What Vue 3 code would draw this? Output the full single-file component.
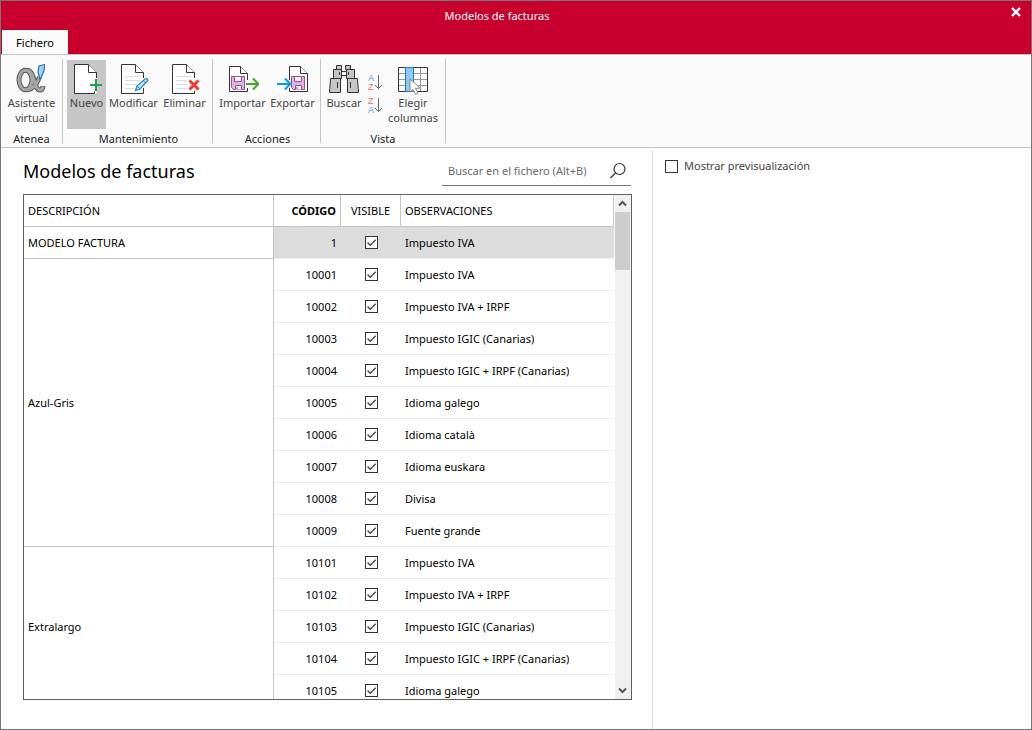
<script setup>
import { ref } from 'vue'

const groups = ref([
  { name: 'MODELO FACTURA', rows: [{ code: 1, visible: true, note: 'Impuesto IVA' }] },
  {
    name: 'Azul-Gris',
    rows: [
      { code: 10001, visible: true, note: 'Impuesto IVA' },
      { code: 10002, visible: true, note: 'Impuesto IVA + IRPF' },
      { code: 10003, visible: true, note: 'Impuesto IGIC (Canarias)' },
      { code: 10004, visible: true, note: 'Impuesto IGIC + IRPF (Canarias)' },
      { code: 10005, visible: true, note: 'Idioma galego' },
      { code: 10006, visible: true, note: 'Idioma català' },
      { code: 10007, visible: true, note: 'Idioma euskara' },
      { code: 10008, visible: true, note: 'Divisa' },
      { code: 10009, visible: true, note: 'Fuente grande' }
    ]
  },
  {
    name: 'Extralargo',
    rows: [
      { code: 10101, visible: true, note: 'Impuesto IVA' },
      { code: 10102, visible: true, note: 'Impuesto IVA + IRPF' },
      { code: 10103, visible: true, note: 'Impuesto IGIC (Canarias)' },
      { code: 10104, visible: true, note: 'Impuesto IGIC + IRPF (Canarias)' },
      { code: 10105, visible: true, note: 'Idioma galego' }
    ]
  }
])
const selected = ref(1)
const search = ref('')
const preview = ref(false)
</script>

<template>
  <div class="window">
    <header class="titlebar">
      <div class="caption">Modelos de facturas</div>
      <button class="close" type="button" aria-label="Cerrar">
        <svg width="10" height="10" viewBox="0 0 10 10"><path d="M1 1L9 9M9 1L1 9" stroke="#fff" stroke-width="2.4" /></svg>
      </button>
      <nav class="tabs"><button class="tab" type="button">Fichero</button></nav>
    </header>

    <div class="ribbon">
      <section class="group atenea">
        <div class="tools">
          <button class="tool" type="button">
            <svg class="icon" viewBox="0 0 32 32" fill="none">
              <g stroke="#555" stroke-width="5">
                <ellipse cx="9.500" cy="17" rx="6.500" ry="9.700" />
                <path d="M12 7.500C19 9 17.500 27 24 27C26 27 26.800 25.500 27 23" />
                <path d="M23.500 14C21 21 17 26.500 11 27" />
              </g>
              <g stroke="#a6a6a6" stroke-width="3">
                <ellipse cx="9.500" cy="17" rx="6.500" ry="9.700" />
                <path d="M12 7.500C19 9 17.500 27 24 27C26 27 26.800 25.500 27 23.500" />
                <path d="M23.500 14C21 21 17 26.500 11 27" />
              </g>
              <path d="M23 3L28.500 1.5L28 8L24 16.500L22 9Z" fill="#9fd0f5" stroke="#1c7cc4" stroke-width="1.2" />
            </svg>
            <span>Asistente<br>virtual</span>
          </button>
        </div>
        <h2>Atenea</h2>
      </section>

      <section class="group mantenimiento">
        <div class="tools">
          <button class="tool active" type="button">
            <svg class="icon" viewBox="0 0 32 32">
              <path d="M3.5 1.5H17.5L25.5 9.5V30.5H3.5Z" fill="#fff" />
              <path d="M25.5 15V9.5L17.5 1.5H3.5V30.5H23.5V28.500" fill="none" stroke="#333" />
              <path d="M17.5 1.5V9.5H25.5" fill="#fff" stroke="#333" />
              <path d="M25 16V28M19 22H31" stroke="#16a84c" stroke-width="2" />
            </svg>
            <span>Nuevo</span>
          </button>
          <button class="tool" type="button">
            <svg class="icon" viewBox="0 0 32 32">
              <path d="M3.5 1.5H17.5L25.5 9.5V30.5H3.5Z" fill="#fff" />
              <path d="M7 13.500H22M7 17.500H22M7 21.500H19M7 25.500H16" stroke="#ddd" />
              <path d="M25.5 15V9.5L17.5 1.5H3.5V30.5H25.5V25" fill="none" stroke="#333" />
              <path d="M17.5 1.5V9.5H25.5" fill="#fff" stroke="#333" />
              <path d="M17.500 27.500L19 23L27 16Q29.500 15 29.800 17.500L22 26Z" fill="#cfe8fa" stroke="#2188cf" stroke-width="1.3" />
              <path d="M25 17.500L28 20M19 23L22 26" stroke="#2188cf" />
            </svg>
            <span>Modificar</span>
          </button>
          <button class="tool" type="button">
            <svg class="icon" viewBox="0 0 32 32">
              <path d="M3.5 1.5H17.5L25.5 9.5V30.5H3.5Z" fill="#fff" />
              <path d="M7 13.500H22M7 17.500H18M7 21.500H18M7 25.500H18" stroke="#ddd" />
              <path d="M25.5 15V9.5L17.5 1.5H3.5V30.5H25.5V28" fill="none" stroke="#333" />
              <path d="M17.5 1.5V9.5H25.5" fill="#fff" stroke="#333" />
              <path d="M20.500 17.500L29.500 26.500M29.500 17.500L20.500 26.500" stroke="#ee3a36" stroke-width="3" />
            </svg>
            <span>Eliminar</span>
          </button>
        </div>
        <h2>Mantenimiento</h2>
      </section>

      <section class="group acciones">
        <div class="tools">
          <button class="tool" type="button">
            <svg class="icon" viewBox="0 0 32 32">
              <path d="M20.5 17V10.5L13.5 3.5H2.5V28.5H20.5V25" fill="#fff" stroke="#333" />
              <path d="M13.5 3.5V10.5H20.5" fill="#fff" stroke="#333" />
              <path d="M4.500 13.500H17.500V26.500H6.500L4.500 24.500Z" fill="#ddb5e0" stroke="#9b4ba4" />
              <path d="M7.500 13.500H14.500V18.500H7.500Z" fill="#fff" stroke="#9b4ba4" />
              <path d="M8.500 26.500V22.500H14.500V26.500" fill="#fff" stroke="#9b4ba4" />
              <path d="M10 24V26" stroke="#9b4ba4" />
              <path d="M19 21H31M26 15.500L31.300 21L26 26.500" fill="none" stroke="#42a62a" stroke-width="2" />
            </svg>
            <span>Importar</span>
          </button>
          <button class="tool" type="button">
            <svg class="icon" viewBox="0 0 32 32">
              <path d="M12.5 17V3.5H23.5L30.5 10.5V28.5H12.5V25" fill="#fff" stroke="#333" />
              <path d="M23.5 3.5V10.5H30.5" fill="#fff" stroke="#333" />
              <path d="M14.500 13.500H27.500V26.500H16.500L14.500 24.500Z" fill="#ddb5e0" stroke="#9b4ba4" />
              <path d="M17.500 13.500H24.500V18.500H17.500Z" fill="#fff" stroke="#9b4ba4" />
              <path d="M18.500 26.500V22.500H24.500V26.500" fill="#fff" stroke="#9b4ba4" />
              <path d="M20 24V26" stroke="#9b4ba4" />
              <path d="M0 21H13M8 15.500L13.300 21L8 26.500" fill="none" stroke="#009fe3" stroke-width="2" />
            </svg>
            <span>Exportar</span>
          </button>
        </div>
        <h2>Acciones</h2>
      </section>

      <section class="group vista">
        <div class="tools">
          <button class="tool find" type="button">
            <svg class="icon" viewBox="0 0 32 32">
              <g fill="#c6c6c6" stroke="#333">
                <path d="M12.500 8.500H19.500V12.500H12.500Z" fill="#fff" />
                <path d="M8.500 2.500H13.500V6.500H8.500ZM17.500 2.500H22.500V6.500H17.500Z" />
                <path d="M5.500 6.500H13.500V15.500H5.500ZM18.500 6.500H26.500V15.500H18.500Z" />
                <path d="M2.500 15.500H12.500V29.500H1.500ZM19.500 15.500H29.500L30.500 29.500H19.500Z" />
                <path d="M9.500 19V25M22.500 19V25M11.500 9V12M20.500 9V12" />
              </g>
            </svg>
            <span>Buscar</span>
          </button>
          <div class="sorts">
            <button type="button" aria-label="Orden ascendente">
              <svg width="18" height="18" viewBox="0 0 18 18">
                <text class="letter" x="1" y="8" fill="#4b9fd8">A</text>
                <text class="letter" x="1" y="17" fill="#f0686c">Z</text>
                <path d="M11.500 2V15.500M8 12L11.500 15.500L15 12" fill="none" stroke="#666" />
              </svg>
            </button>
            <button type="button" aria-label="Orden descendente">
              <svg width="18" height="18" viewBox="0 0 18 18">
                <text class="letter" x="1" y="8" fill="#f0686c">Z</text>
                <text class="letter" x="1" y="17" fill="#4b9fd8">A</text>
                <path d="M11.500 2V15.500M8 12L11.500 15.500L15 12" fill="none" stroke="#666" />
              </svg>
            </button>
          </div>
          <button class="tool" type="button">
            <svg class="icon" viewBox="0 0 32 32">
              <path d="M1.500 4.500H30.500V28.500H1.500Z" fill="#fff" />
              <path d="M1 10.500H31M1 16.500H31M1 22.500H31M23.500 4V28" stroke="#999" />
              <path d="M1.500 4.500H30.500V28.500H1.500Z" fill="none" stroke="#333" />
              <path d="M8.500 4.500H16.500V28.500H8.500Z" fill="#8fc8f0" stroke="#1c7cc4" />
              <path d="M13 16V29L16 26.500L18.500 31.500L21 30L18.500 25.500L23 25Z" fill="#fff" stroke="#888" />
            </svg>
            <span>Elegir<br>columnas</span>
          </button>
        </div>
        <h2>Vista</h2>
      </section>
    </div>

    <main class="content">
      <section class="list">
        <div class="list-head">
          <h1>Modelos de facturas</h1>
          <form class="search" @submit.prevent>
            <input v-model="search" type="text" placeholder="Buscar en el fichero (Alt+B)" aria-label="Buscar en el fichero">
            <button type="submit" aria-label="Buscar">
              <svg width="18" height="18" viewBox="0 0 18 18"><circle cx="10.500" cy="7" r="5.500" fill="none" stroke="#333" stroke-width="1.200" /><path d="M6.500 11L1.500 16" stroke="#333" stroke-width="1.300" /></svg>
            </button>
          </form>
        </div>

        <div class="grid">
          <div class="viewport">
            <table>
              <colgroup><col class="c-desc"><col class="c-code"><col class="c-vis"><col></colgroup>
              <thead>
                <tr><th>DESCRIPCIÓN</th><th class="code">CÓDIGO</th><th class="vis">VISIBLE</th><th>OBSERVACIONES</th></tr>
              </thead>
              <tbody>
                <template v-for="group in groups" :key="group.name">
                  <tr v-for="(row, i) in group.rows" :key="row.code" :class="{ selected: row.code === selected }" @click="selected = row.code">
                    <td v-if="i === 0" class="desc" :rowspan="group.rows.length">{{ group.name }}</td>
                    <td class="code">{{ row.code }}</td>
                    <td class="vis"><input v-model="row.visible" class="check" type="checkbox" :aria-label="'Visible ' + row.code"></td>
                    <td>{{ row.note }}</td>
                  </tr>
                </template>
              </tbody>
            </table>
          </div>
          <div class="scrollbar">
            <button type="button" aria-label="Subir"><svg width="9" height="7" viewBox="0 0 9 7"><path d="M1 5.500L4.500 2L8 5.500" fill="none" stroke="#555" stroke-width="2" /></svg></button>
            <div class="track"><div class="thumb"></div></div>
            <button type="button" aria-label="Bajar"><svg width="9" height="7" viewBox="0 0 9 7"><path d="M1 1.500L4.500 5L8 1.500" fill="none" stroke="#555" stroke-width="2" /></svg></button>
          </div>
        </div>
      </section>

      <aside class="preview">
        <label><input v-model="preview" class="check" type="checkbox">Mostrar previsualización</label>
      </aside>
    </main>
  </div>
</template>

<style>
body { margin: 0; }
</style>

<style scoped>
* { box-sizing: border-box; }
.window {
  display: flex;
  flex-direction: column;
  height: 100vh;
  border: 1px solid #777;
  background: #fff;
  color: #000;
  font: 11px/16px "Noto Sans", "Open Sans", sans-serif;
}
button {
  margin: 0;
  padding: 0;
  border: 0;
  background: none;
  color: inherit;
  font: inherit;
}
svg { display: block; }
h1, h2 { margin: 0; font-weight: 400; }

.titlebar {
  position: relative;
  flex: none;
  background: #c8002d;
  color: #fff;
}
.caption {
  height: 29px;
  padding-right: 38px;
  line-height: 30px;
  text-align: center;
}
.close {
  position: absolute;
  top: 6px;
  right: 10px;
}
.tabs {
  display: flex;
  padding-left: 1px;
}
.tab {
  width: 66px;
  height: 24px;
  padding-top: 2px;
  background: #fafafa;
  color: #000;
}

.ribbon {
  display: flex;
  flex: none;
  height: 94px;
  padding: 4px 0;
  border-top: 1px solid #c6c6c6;
  border-bottom: 1px solid #c6c6c6;
  background: #fafafa;
}
.group {
  display: flex;
  flex-direction: column;
  border-right: 1px solid #c6c6c6;
}
.group h2 {
  font-size: 11px;
  line-height: 8px;
  text-align: center;
  color: #222;
}
.tools {
  display: flex;
  flex: 1;
  justify-content: center;
  padding-top: 1px;
}
.tool {
  display: flex;
  flex-direction: column;
  align-items: center;
  height: 69px;
  padding-top: 3px;
  line-height: 15px;
  color: #444;
  white-space: nowrap;
}
.active { background: #c6c6c6; }
.icon { width: 32px; height: 32px; }
.letter { font: 9px "Liberation Sans", sans-serif; }
.atenea { width: 62px; }
.mantenimiento { width: 150px; padding-left: 2px; }
.mantenimiento .tool { width: 51px; }
.mantenimiento .active { width: 39px; margin-right: 2px; }
.acciones { width: 108px; padding-left: 2px; }
.acciones .tool { width: 50px; }
.vista { width: 125px; }
.vista .tools { justify-content: flex-start; }
.vista .tool { width: 48px; }
.vista .find { width: 46px; }
.sorts {
  display: flex;
  flex-direction: column;
  gap: 5px;
  width: 22px;
  padding-top: 13px;
}

.content {
  display: grid;
  grid-template-columns: minmax(0, 651fr) minmax(0, 379fr);
  flex: 1;
  min-height: 0;
  padding-top: 2px;
}
.list {
  display: flex;
  flex-direction: column;
  min-height: 0;
  padding: 6px 20px 29px 22px;
}
.list-head {
  display: flex;
  justify-content: space-between;
  margin-bottom: 8px;
  padding-right: 1px;
}
h1 { font-size: 18px; line-height: 30px; }
.search {
  display: flex;
  align-items: center;
  width: 189px;
  height: 30px;
  border-bottom: 1px solid #777;
}
.search input {
  flex: 1;
  min-width: 0;
  padding: 0 0 0 6px;
  border: 0;
  outline: 0;
  background: none;
  font: inherit;
}
.search input::placeholder { color: #6b6b6b; opacity: 1; }
.search button { margin-right: 4px; }

.grid {
  display: flex;
  flex: 1;
  min-height: 0;
  border: 1px solid #5f5f5f;
}
.viewport {
  flex: 1;
  min-width: 0;
  margin-right: 1px;
  overflow: hidden;
}
table {
  width: 100%;
  border-spacing: 0;
  table-layout: fixed;
}
.c-desc { width: 250px; }
.c-code { width: 67px; }
.c-vis { width: 60px; }
th, td {
  height: 32px;
  padding: 0 4px;
  border-bottom: 1px solid #ededed;
  text-align: left;
  white-space: nowrap;
}
th {
  border-right: 1px solid #c6c6c6;
  border-bottom-color: #c6c6c6;
  font-weight: 400;
}
.desc {
  border-right: 1px solid #c6c6c6;
  border-bottom-color: #c6c6c6;
}
.code { text-align: right; }
th.code { font-weight: 700; }
.vis { text-align: center; }
.selected td:not(.desc) { background: #dcdcdc; }
.check {
  display: block;
  flex: none;
  width: 13px;
  height: 13px;
  margin: 0;
  border: 1px solid #333;
  appearance: none;
  background: #fff;
}
.vis .check { margin: 0 auto; }
.check:checked {
  background: #fff url("data:image/svg+xml,%3Csvg xmlns='http://www.w3.org/2000/svg' viewBox='0 0 11 11'%3E%3Cpath d='M1.500 5.500L4.300 8.300L9.700 2.800' fill='none' stroke='%23444' stroke-width='1.300'/%3E%3C/svg%3E");
}

.scrollbar {
  display: flex;
  flex-direction: column;
  width: 16px;
  background: #f0f0f0;
}
.scrollbar button {
  display: flex;
  align-items: center;
  justify-content: center;
  width: 15px;
  height: 17px;
}
.track { flex: 1; }
.thumb {
  width: 15px;
  height: 58px;
  background: #cdcdcd;
}

.preview {
  padding: 8px 12px;
  border-left: 1px solid #dcdcdc;
  color: #444;
}
.preview label {
  display: inline-flex;
  align-items: center;
  gap: 6px;
}
</style>
